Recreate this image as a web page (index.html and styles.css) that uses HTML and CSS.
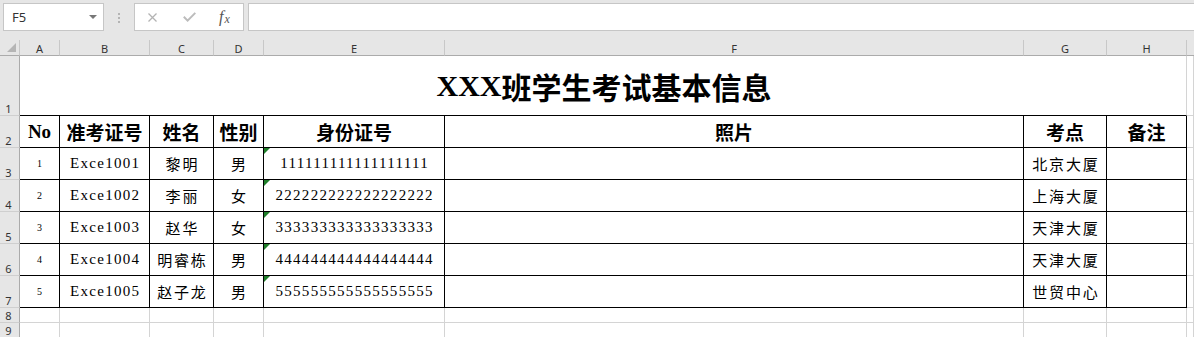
FILE: index.html
```html
<!DOCTYPE html>
<html lang="zh">
<head>
<meta charset="utf-8">
<title>XXX班学生考试基本信息</title>
<link rel="stylesheet" href="styles.css">
</head>
<body>
<div class="app">
  <div class="fbar">
    <div class="namebox"><span class="ref">F5</span><span class="dd"></span></div>
    <div class="grip"><i></i><i></i><i></i></div>
    <div class="fxbox">
      <svg class="ic-x" width="9" height="9" viewBox="0 0 9 9"><path d="M0.5 0.5L8.5 8.5M8.5 0.5L0.5 8.5" stroke="#b3b3b3" stroke-width="1.3" fill="none"/></svg>
      <svg class="ic-ok" width="13" height="10" viewBox="0 0 13 10"><path d="M0.8 4.8L4.6 8.6L12.3 0.9" stroke="#bcbcbc" stroke-width="2" fill="none"/></svg>
      <span class="fx"><i>f</i><i class="x">x</i></span>
    </div>
    <div class="finput"></div>
  </div>

  <div class="sheet">
    <div class="corner"><span class="tri"></span></div>
    <div class="ch">A</div><div class="ch">B</div><div class="ch">C</div><div class="ch">D</div>
    <div class="ch">E</div><div class="ch">F</div><div class="ch">G</div><div class="ch">H</div><div class="ch last"></div>

    <div class="rh">1</div>
    <div class="c title">XXX<span class="tcn">班学生考试基本信息</span></div>
    <div class="c"></div>

    <div class="rh">2</div>
    <div class="c t hd">No</div><div class="c t hd">准考证号</div><div class="c t hd">姓名</div><div class="c t hd">性别</div>
    <div class="c t hd">身份证号</div><div class="c t hd">照片</div><div class="c t hd">考点</div><div class="c t hd">备注</div><div class="c"></div>

    <div class="rh">3</div>
    <div class="c t num">1</div><div class="c t id">Exce1001</div><div class="c t cn">黎明</div><div class="c t cn">男</div>
    <div class="c t id flag">111111111111111111</div><div class="c t"></div><div class="c t cn">北京大厦</div><div class="c t"></div><div class="c"></div>

    <div class="rh">4</div>
    <div class="c t num">2</div><div class="c t id">Exce1002</div><div class="c t cn">李丽</div><div class="c t cn">女</div>
    <div class="c t id flag">222222222222222222</div><div class="c t"></div><div class="c t cn">上海大厦</div><div class="c t"></div><div class="c"></div>

    <div class="rh">5</div>
    <div class="c t num">3</div><div class="c t id">Exce1003</div><div class="c t cn">赵华</div><div class="c t cn">女</div>
    <div class="c t id flag">333333333333333333</div><div class="c t"></div><div class="c t cn">天津大厦</div><div class="c t"></div><div class="c"></div>

    <div class="rh">6</div>
    <div class="c t num">4</div><div class="c t id">Exce1004</div><div class="c t cn">明睿栋</div><div class="c t cn">男</div>
    <div class="c t id flag">444444444444444444</div><div class="c t"></div><div class="c t cn">天津大厦</div><div class="c t"></div><div class="c"></div>

    <div class="rh">7</div>
    <div class="c t num">5</div><div class="c t id">Exce1005</div><div class="c t cn">赵子龙</div><div class="c t cn">男</div>
    <div class="c t id flag">555555555555555555</div><div class="c t"></div><div class="c t cn">世贸中心</div><div class="c t"></div><div class="c"></div>

    <div class="rh">8</div>
    <div class="c"></div><div class="c"></div><div class="c"></div><div class="c"></div><div class="c"></div>
    <div class="c"></div><div class="c"></div><div class="c"></div><div class="c"></div>

    <div class="rh">9</div>
    <div class="c"></div><div class="c"></div><div class="c"></div><div class="c"></div><div class="c"></div>
    <div class="c"></div><div class="c"></div><div class="c"></div><div class="c"></div>
  </div>
</div>
</body>
</html>
```

FILE: styles.css
```css
* {
  box-sizing: border-box;
  margin: 0;
  padding: 0;
}

html, body {
  background: #ffffff;
}

body {
  width: 1194px;
  height: 337px;
  overflow: hidden;
  font-family: "Liberation Serif", "Noto Sans CJK SC", serif;
  color: #000;
}

/* ---------- formula bar ---------- */
.fbar {
  height: 40px;
  background: #e6e6e6;
  display: flex;
  align-items: flex-start;
  padding-top: 3px;
}

.namebox {
  margin-left: 3px;
  width: 101px;
  height: 28px;
  background: #fff;
  border: 1px solid #c6c6c6;
  display: flex;
  align-items: center;
  justify-content: space-between;
  padding: 0 6px 0 8px;
  font: 13px "Noto Sans", "Liberation Sans", sans-serif;
  color: #333;
}

.dd {
  width: 0;
  height: 0;
  border-left: 4px solid transparent;
  border-right: 4px solid transparent;
  border-top: 4px solid #777;
}

.grip {
  margin-left: 14px;
  margin-top: 10px;
  width: 2px;
  display: flex;
  flex-direction: column;
  gap: 2px;
}

.grip i {
  display: block;
  width: 2px;
  height: 2px;
  background: #b4b4b4;
}

.fxbox {
  margin-left: 14px;
  width: 110px;
  height: 28px;
  background: #fff;
  border: 1px solid #c6c6c6;
  display: flex;
  align-items: center;
}

.ic-x {
  margin-left: 13px;
  display: block;
}

.ic-ok {
  margin-left: 26px;
  display: block;
}

.fx {
  margin-left: 23px;
  font-family: "Liberation Serif", serif;
  font-size: 16px;
  color: #555;
  line-height: 1;
}

.fx .x {
  font-size: 12px;
  position: relative;
  top: 1px;
  margin-left: 1px;
}

.finput {
  margin-left: 4px;
  flex: 1;
  margin-right: -2px;
  height: 28px;
  background: #fff;
  border: 1px solid #c6c6c6;
}

/* ---------- sheet grid ---------- */
.sheet {
  display: grid;
  grid-template-columns: 20px 40px 90px 64px 50px 181px 579px 83px 80px 1fr;
  grid-template-rows: 16px 60px repeat(6, 32px) 15px 15px;
}

.corner {
  background: #e6e6e6;
  border-right: 1px solid #c8c8c8;
  border-bottom: 1px solid #ababab;
  display: flex;
  align-items: flex-end;
  justify-content: flex-end;
  padding: 0 3px 3px 0;
}

.corner .tri {
  width: 0;
  height: 0;
  border-left: 9px solid transparent;
  border-bottom: 9px solid #b5b5b5;
}

.ch {
  background: #e6e6e6;
  border-right: 1px solid #c8c8c8;
  border-bottom: 1px solid #ababab;
  font: 11px "Noto Sans", "Liberation Sans", sans-serif;
  color: #333;
  display: flex;
  align-items: center;
  justify-content: center;
  padding-top: 2px;
}

.ch.last {
  border-right: none;
}

.rh {
  background: #e6e6e6;
  border-right: 1px solid #ababab;
  border-bottom: 1px solid #cfcfcf;
  font: 11px "Noto Sans", "Liberation Sans", sans-serif;
  color: #333;
  display: flex;
  align-items: flex-end;
  justify-content: center;
  padding-right: 2px;
  line-height: 13px;
}

.c {
  border-right: 1px solid #d4d4d4;
  border-bottom: 1px solid #d4d4d4;
  display: flex;
  align-items: center;
  justify-content: center;
  white-space: nowrap;
  position: relative;
}

.c.t {
  border-right-color: #000;
  border-bottom-color: #000;
}

.title {
  grid-column: span 8;
  border-bottom-color: #000;
  font-weight: bold;
  font-size: 30px;
  padding-left: 2px;
}

.title .tcn {
  font-size: 30px;
  letter-spacing: 0;
}

.hd {
  font-weight: bold;
  font-size: 19px;
}

.num {
  font-size: 10px;
}

.id {
  font-size: 15px;
  letter-spacing: 1.3px;
  padding-left: 1.3px;
}

.cn {
  font-size: 15px;
  letter-spacing: 1.8px;
  padding-left: 1.8px;
}

.flag::before {
  content: "";
  position: absolute;
  left: 0;
  top: 0;
  width: 0;
  height: 0;
  border-top: 6px solid #1f7f2a;
  border-right: 6px solid transparent;
}
```
